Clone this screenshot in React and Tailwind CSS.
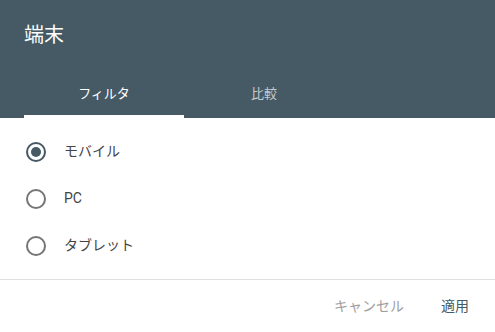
import { useState } from "react";

const OPTIONS = ["モバイル", "PC", "タブレット"];

const Radio = ({ checked }) => (
  <span
    className={`w-5 h-5 rounded-full border-2 flex items-center justify-center ${
      checked ? "border-[#455a64]" : "border-[#757575]"
    }`}
  >
    {checked && <span className="w-2.5 h-2.5 rounded-full bg-[#455a64]" />}
  </span>
);

const App = () => {
  const [tab, setTab] = useState(0);
  const [device, setDevice] = useState(0);

  return (
    <div
      className="w-[495px] h-[332px] bg-white flex flex-col overflow-hidden"
      style={{ fontFamily: '"Roboto", "Noto Sans CJK JP", sans-serif' }}
    >
      {/* Header */}
      <div className="bg-[#455a64] px-6 pt-[21px]">
        <h1 className="text-[20px] leading-[28px] text-white font-normal h-[49px]">端末</h1>
        <div className="flex h-[48px]">
          {["フィルタ", "比較"].map((label, i) => (
            <button
              key={label}
              onClick={() => setTab(i)}
              className={`w-[160px] relative flex items-center justify-center text-[13px] ${
                tab === i ? "text-white" : "text-white/70"
              }`}
            >
              {label}
              {tab === i && (
                <span className="absolute left-0 right-0 bottom-0 h-[3px] bg-white" />
              )}
            </button>
          ))}
        </div>
      </div>

      {/* Options */}
      <div className="px-6 pt-[10px] pb-[10px] border-b border-[#e0e0e0]">
        {OPTIONS.map((opt, i) => (
          <label
            key={opt}
            onClick={() => setDevice(i)}
            className="h-[47px] flex items-center gap-[18px] cursor-pointer"
          >
            <span className="pl-[2px]">
              <Radio checked={device === i} />
            </span>
            <span className="text-[14px] text-[#444444]">{opt}</span>
          </label>
        ))}
      </div>

      {/* Footer */}
      <div className="flex-1 flex items-center justify-end pr-[16px] gap-[17px] text-[14px]">
        <button className="px-[10px] h-9 text-[#9e9e9e]">キャンセル</button>
        <button className="px-[10px] h-9 text-[#455a64]">適用</button>
      </div>
    </div>
  );
};

export default App;
